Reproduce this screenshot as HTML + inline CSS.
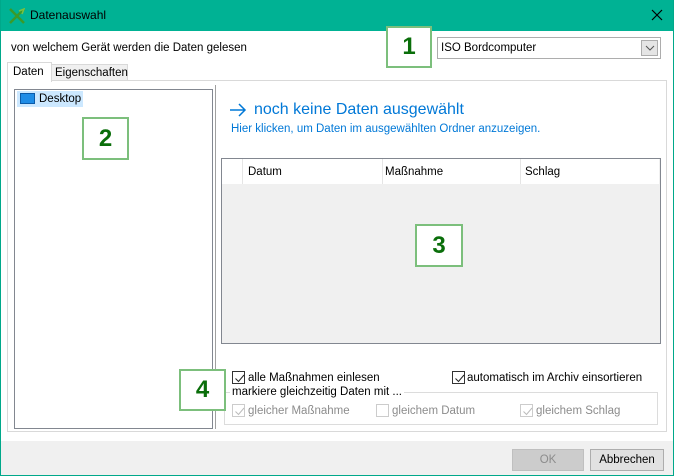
<!DOCTYPE html>
<html><head><meta charset="utf-8"><style>
*{box-sizing:border-box;margin:0;padding:0}
body{width:674px;height:476px;position:relative;font-family:"Liberation Sans",sans-serif;font-size:11.5px;color:#000;background:#f0f0f0;overflow:hidden}
.a{position:absolute}
.win{left:0;top:0;width:674px;height:476px;border:1px solid #00a88a;border-top:none}
.title{left:0;top:0;width:674px;height:31px;background:#00b294}
.num{position:absolute;background:#fff;border:2px solid #7cbf7c;color:#0a6e0a;font-weight:bold;font-size:24px;text-align:center}
.cb{position:absolute;width:13px;height:13px;border:1px solid #333;background:#fff}
.cb.d{border-color:#ccc}
.cb svg{position:absolute;left:1px;top:1px}
.t{position:absolute;white-space:nowrap}
.g{color:#8c8c8c}
</style></head><body>
<div class="a title"></div>
<div class="a win"></div>
<svg class="a" style="left:9px;top:8px" width="16" height="16" viewBox="0 0 16 16"><path d="M1 1 L15 15 M15 1 L1 15" stroke="#3a9a2a" stroke-width="2.5"/><path d="M10 3 L15 1 L13 6" stroke="#7ac143" stroke-width="1.5" fill="none"/></svg>
<div class="t" style="left:30px;top:8px;font-size:12px">Datenauswahl</div>
<svg class="a" style="left:651px;top:9px" width="12" height="12"><path d="M1 1L11 11M11 1L1 11" stroke="#000" stroke-width="1.2"/></svg>
<div class="a" style="left:1px;top:31px;width:672px;height:410px;background:#fff"></div>
<div class="t" style="left:11px;top:42px">von welchem Gerät werden die Daten gelesen</div>
<div class="a" style="left:437px;top:37px;width:224px;height:22px;border:1px solid #adadad;background:#fff"></div>
<div class="t" style="left:441px;top:42px">ISO Bordcomputer</div>
<div class="a" style="left:641px;top:40px;width:17px;height:16px;border:1px solid #adadad;background:#e5e5e5"></div>
<svg class="a" style="left:645px;top:45px" width="10" height="6"><path d="M1 1L5 5L9 1" stroke="#555" fill="none"/></svg>
<div class="num" style="left:386px;top:26px;width:46px;height:42px;line-height:38px">1</div>
<div class="a" style="left:7px;top:80px;width:660px;height:352px;border:1px solid #d9d9d9;background:#fff"></div>
<div class="a" style="left:51px;top:64px;width:77px;height:17px;border:1px solid #d9d9d9;background:#f0f0f0"></div>
<div class="t" style="left:55px;top:67px">Eigenschaften</div>
<div class="a" style="left:7px;top:62px;width:45px;height:20px;border:1px solid #d9d9d9;border-bottom:none;background:#fff"></div>
<div class="t" style="left:13px;top:66px">Daten</div>
<div class="a" style="left:14px;top:89px;width:199px;height:340px;border:1px solid #828790"></div>
<div class="a" style="left:17px;top:91px;width:66px;height:16px;background:#cce8ff"></div>
<div class="a" style="left:20px;top:93px;width:15px;height:11px;background:#1e8ce6;border:1px solid #0a5aa8"></div>
<div class="t" style="left:39px;top:93px">Desktop</div>
<div class="num" style="left:82px;top:117px;width:47px;height:43px;line-height:40px">2</div>
<div class="a" style="left:215px;top:85px;width:1px;height:344px;background:#a0a0a0"></div>
<svg class="a" style="left:229px;top:103px" width="18" height="14"><path d="M1 7H16M10 1L16 7L10 13" stroke="#0078d7" stroke-width="1.5" fill="none"/></svg>
<div class="t" style="left:254px;top:101px;font-size:16px;color:#0078d7">noch keine Daten ausgewählt</div>
<div class="t" style="left:231px;top:123px;font-size:11.5px;color:#0078d7">Hier klicken, um Daten im ausgewählten Ordner anzuzeigen.</div>
<div class="a" style="left:221px;top:158px;width:440px;height:186px;border:1px solid #828790;background:#f0f0f0"></div>
<div class="a" style="left:222px;top:159px;width:437px;height:25px;background:#fff"></div>
<div class="a" style="left:242px;top:159px;width:1px;height:25px;background:#e5e5e5"></div>
<div class="a" style="left:382px;top:159px;width:1px;height:25px;background:#e5e5e5"></div>
<div class="a" style="left:520px;top:159px;width:1px;height:25px;background:#e5e5e5"></div>
<div class="t" style="left:248px;top:166px">Datum</div>
<div class="t" style="left:385px;top:166px">Maßnahme</div>
<div class="t" style="left:525px;top:166px">Schlag</div>
<div class="num" style="left:415px;top:224px;width:48px;height:43px;line-height:40px">3</div>
<div class="a" style="left:224px;top:392px;width:434px;height:33px;border:1px solid #dcdcdc"></div>
<div class="a t" style="left:230px;top:386px;background:#fff;padding:0 2px">markiere gleichzeitig Daten mit ...</div>
<div class="cb" style="left:232px;top:371px"><svg width="11" height="11"><path d="M1.5 5.5L4.5 8.5L10 2" stroke="#222" fill="none"/></svg></div>
<div class="t" style="left:248px;top:372px">alle Maßnahmen einlesen</div>
<div class="cb" style="left:452px;top:371px"><svg width="11" height="11"><path d="M1.5 5.5L4.5 8.5L10 2" stroke="#222" fill="none"/></svg></div>
<div class="t" style="left:467px;top:372px">automatisch im Archiv einsortieren</div>
<div class="cb d" style="left:232px;top:404px"><svg width="11" height="11"><path d="M1.5 5.5L4.5 8.5L10 2" stroke="#bbb" fill="none"/></svg></div>
<div class="t g" style="left:248px;top:405px">gleicher Maßnahme</div>
<div class="cb d" style="left:376px;top:404px"></div>
<div class="t g" style="left:392px;top:405px">gleichem Datum</div>
<div class="cb d" style="left:520px;top:404px"><svg width="11" height="11"><path d="M1.5 5.5L4.5 8.5L10 2" stroke="#bbb" fill="none"/></svg></div>
<div class="t g" style="left:536px;top:405px">gleichem Schlag</div>
<div class="num" style="left:179px;top:369px;width:47px;height:42px;line-height:38px">4</div>
<div class="a" style="left:512px;top:449px;width:72px;height:22px;border:1px solid #bfbfbf;background:#ccc;color:#8c8c8c;text-align:center;line-height:20px">OK</div>
<div class="a" style="left:590px;top:449px;width:74px;height:22px;border:1px solid #adadad;background:#e1e1e1;text-align:center;line-height:20px">Abbrechen</div>
</body></html>
